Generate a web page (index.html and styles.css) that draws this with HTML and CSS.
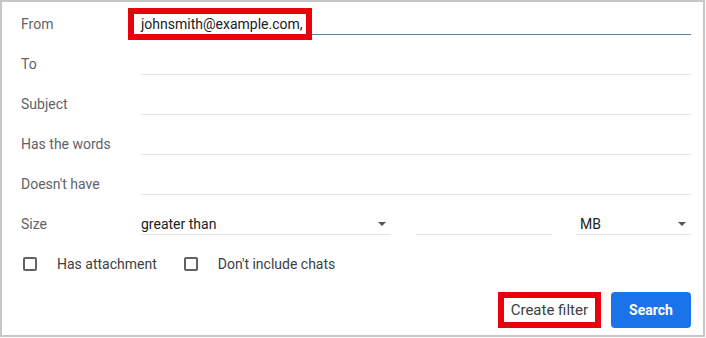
FILE: index.html
```html
<!DOCTYPE html>
<html>
<head>
	<title>Search filter</title>
	<meta charset="utf-8">
	<link rel="stylesheet" href="styles.css">
</head>
<body>
<div class="panel">
	<div class="row">
		<span class="label">From</span>
		<div class="field focused"><span class="marked">johnsmith@example.com,</span></div>
	</div>
	<div class="row">
		<span class="label">To</span>
		<div class="field"></div>
	</div>
	<div class="row">
		<span class="label">Subject</span>
		<div class="field"></div>
	</div>
	<div class="row">
		<span class="label">Has the words</span>
		<div class="field"></div>
	</div>
	<div class="row">
		<span class="label">Doesn't have</span>
		<div class="field"></div>
	</div>
	<div class="row">
		<span class="label">Size</span>
		<div class="sizeGroup">
			<div class="field select wide">greater than<i class="caret"></i></div>
			<div class="field num"></div>
			<div class="field select unit">MB<i class="caret"></i></div>
		</div>
	</div>
	<div class="row checks">
		<span class="box"></span><span class="checkText">Has attachment</span>
		<span class="box"></span><span class="checkText">Don't include chats</span>
	</div>
	<div class="actions">
		<button class="plainBtn">Create filter</button>
		<button class="blueBtn">Search</button>
	</div>
</div>
</body>
</html>
```

FILE: styles.css
```css
html,body{
	margin: 0;
	padding: 0;
	background-color: #fff;
}

.panel{
	width: 705px;
	height: 337px;
	box-sizing: border-box;
	border: 2px solid #c6c6c6;
	padding: 2px 12px 0 19px;
	font-family: Roboto, "Liberation Sans", sans-serif;
	font-size: 14px;
	color: #222;
}

.row{
	display: flex;
	align-items: center;
	height: 40px;
}
.label{
	width: 120px;
	flex: none;
	color: #5f6368;
}

.field{
	flex: 1;
	height: 21px;
	box-sizing: border-box;
	line-height: 20px;
	border-bottom: 1px solid #e3e3e3;
	position: relative;
}
.field.focused{
	border-bottom-color: #5b88aa;
}

/* red annotation round the typed address */
.marked{
	display: inline-block;
	height: 20px;
	margin-left: -7px;
	padding: 0 3px 0 7px;
	outline: 6px solid #e8000b;
	color: #202124;
}

.sizeGroup{
	flex: 1;
	display: flex;
}
.select.wide{
	flex: none;
	width: 250px;
}
.num{
	flex: none;
	width: 136px;
	margin: 0 24px 0 25px;
}
.unit{
	padding-left: 4px;
}
.caret{
	position: absolute;
	right: 5px;
	top: 8px;
	border-left: 4px solid transparent;
	border-right: 4px solid transparent;
	border-top: 4px solid #555;
	width: 0;
	height: 0;
}

.checks{
	padding-left: 2px;
	color: #3c4043;
}
.box{
	width: 14px;
	height: 14px;
	box-sizing: border-box;
	border: 2px solid #5f6368;
	border-radius: 2px;
}
.checkText{
	margin: 0 27px 0 20px;
}

.actions{
	display: flex;
	justify-content: flex-end;
	align-items: center;
	margin-top: 8px;
}
.plainBtn{
	height: 24px;
	padding: 0 7px;
	margin-right: 16px;
	border: none;
	background-color: #fff;
	outline: 6px solid #e8000b;
	font-family: Roboto, "Liberation Sans", sans-serif;
	font-size: 15px;
	color: #3c4043;
}
.blueBtn{
	width: 80px;
	height: 36px;
	border: none;
	border-radius: 4px;
	background-color: #1a73e8;
	color: #fff;
	font-family: Roboto, "Liberation Sans", sans-serif;
	font-size: 14px;
	font-weight: 700;
}
```
